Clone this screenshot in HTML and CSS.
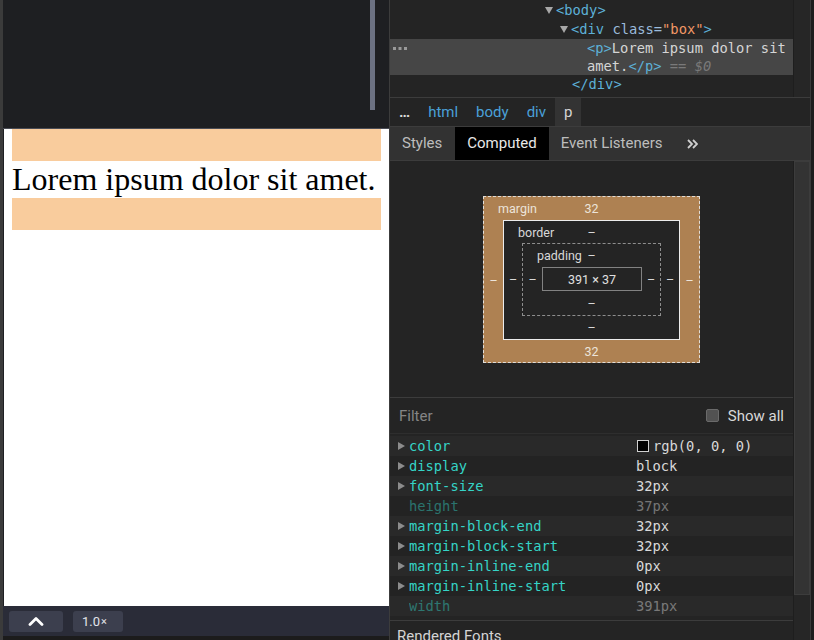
FILE: index.html
```html
<!DOCTYPE html>
<html lang="en">
<head>
<meta charset="utf-8">
<title>DevTools Computed</title>
<link rel="stylesheet" href="styles.css">
</head>
<body>
<div class="app">
  <div class="viewport-pane">
    <div class="viewport-dark"><div class="vthumb"></div></div>
    <div class="page">
      <div class="hl"></div>
      <p class="lorem">Lorem ipsum dolor sit amet.</p>
      <div class="hl"></div>
    </div>
    <div class="toolbar">
      <div class="tb-btn tb-up"><svg width="16" height="10" viewBox="0 0 16 10"><polyline points="2,8.5 8,2.5 14,8.5" fill="none" stroke="#ffffff" stroke-width="2.8" stroke-linecap="round" stroke-linejoin="round"/></svg></div>
      <div class="tb-btn tb-zoom">1.0<span class="times">×</span></div>
    </div>
    <div class="bottom-strip"></div>
  </div>

  <div class="devtools">
    <div class="dom-area">
      <div class="dom-tree">
        <div class="dom-row r-body"><span class="tri-down"></span><span class="tag">&lt;body&gt;</span></div>
        <div class="dom-row r-div"><span class="tri-down"></span><span class="tag">&lt;div</span> <span class="attr">class=</span><span class="aval">"box"</span><span class="tag">&gt;</span></div>
        <div class="dom-row r-sel">
          <svg class="sel-dots" width="14" height="3" viewBox="0 0 14 3"><rect x="0" y="0" width="3" height="3" fill="#9a9a9a"/><rect x="5.5" y="0" width="3" height="3" fill="#9a9a9a"/><rect x="11" y="0" width="3" height="3" fill="#9a9a9a"/></svg>
          <div class="sel-text"><span class="tag">&lt;p&gt;</span><span class="txt">Lorem ipsum dolor sit</span><br><span class="txt">amet.</span><span class="tag">&lt;/p&gt;</span> <span class="eq">== $0</span></div>
        </div>
        <div class="dom-row r-enddiv"><span class="tag">&lt;/div&gt;</span></div>
      </div>
      <div class="dom-scroll"></div>
    </div>

    <div class="crumbs">
      <span class="crumb crumb-more">…</span>
      <span class="crumb crumb-link">html</span>
      <span class="crumb crumb-link">body</span>
      <span class="crumb crumb-link">div</span>
      <span class="crumb crumb-sel">p</span>
    </div>

    <div class="tabs">
      <span class="tab tab-styles">Styles</span>
      <span class="tab tab-active">Computed</span>
      <span class="tab">Event Listeners</span>
      <span class="tab tab-more"><svg width="11" height="10" viewBox="0 0 11 10"><polyline points="1,1 5,5 1,9" fill="none" stroke="#cfcfcf" stroke-width="1.8"/><polyline points="6,1 10,5 6,9" fill="none" stroke="#cfcfcf" stroke-width="1.8"/></svg></span>
    </div>

    <div class="computed">
      <div class="computed-main">
        <div class="bm-wrap">
          <div class="bm bm-margin">
            <div class="bm-top"><span class="bm-label">margin</span><span class="bm-val">32</span><span></span></div>
            <div class="bm-side">–</div>
            <div class="bm bm-border">
              <div class="bm-top"><span class="bm-label">border</span><span class="bm-val">–</span><span></span></div>
              <div class="bm-side">–</div>
              <div class="bm bm-padding">
                <div class="bm-top"><span class="bm-label">padding</span><span class="bm-val">–</span><span></span></div>
                <div class="bm-side">–</div>
                <div class="bm-content">391 × 37</div>
                <div class="bm-side">–</div>
                <div class="bm-bottom">–</div>
              </div>
              <div class="bm-side">–</div>
              <div class="bm-bottom">–</div>
            </div>
            <div class="bm-side">–</div>
            <div class="bm-bottom">32</div>
          </div>
        </div>

        <div class="filter-row">
          <span class="filter-ph">Filter</span>
          <label class="showall"><span class="cbox"></span><span>Show all</span></label>
        </div>

        <div class="props">
          <div class="prop odd"><span class="tri-right"></span><span class="pname">color</span><span class="pval"><span class="swatch"></span>rgb(0, 0, 0)</span></div>
          <div class="prop"><span class="tri-right"></span><span class="pname">display</span><span class="pval">block</span></div>
          <div class="prop odd"><span class="tri-right"></span><span class="pname">font-size</span><span class="pval">32px</span></div>
          <div class="prop dim"><span></span><span class="pname">height</span><span class="pval">37px</span></div>
          <div class="prop odd"><span class="tri-right"></span><span class="pname">margin-block-end</span><span class="pval">32px</span></div>
          <div class="prop"><span class="tri-right"></span><span class="pname">margin-block-start</span><span class="pval">32px</span></div>
          <div class="prop odd"><span class="tri-right"></span><span class="pname">margin-inline-end</span><span class="pval">0px</span></div>
          <div class="prop"><span class="tri-right"></span><span class="pname">margin-inline-start</span><span class="pval">0px</span></div>
          <div class="prop odd dim"><span></span><span class="pname">width</span><span class="pval">391px</span></div>
        </div>

        <div class="section-head">Rendered Fonts</div>
      </div>
      <div class="c-scroll"><div class="c-thumb"></div></div>
    </div>
  </div>
  <div class="edge"></div>
</div>
</body>
</html>
```

FILE: styles.css
```css
* { box-sizing: border-box; margin: 0; padding: 0; }
html, body { width: 814px; height: 640px; overflow: hidden; background: #242424; }
body { font-family: Roboto, "Noto Sans", sans-serif; font-size: 15px; color: #d6d6d6; }

.app { display: flex; width: 814px; height: 640px; }

/* ---------- left viewport ---------- */
.viewport-pane {
  width: 389px; flex: none; display: flex; flex-direction: column;
  border-left: 3px solid #3b3b3b; background: #1e1f22;
}
.viewport-dark {
  height: 129px; flex: none; border-bottom: 1px solid #4a4c55;
  display: flex; justify-content: flex-end; align-items: flex-start; padding-right: 14px;
}
.vthumb { width: 5px; height: 110px; background: #6c7182; }
.page { height: 477px; flex: none; background: #ffffff; margin-left: 1px; padding: 0 8px; }
.hl { height: 32px; background: #f9cc9d; }
.lorem { font-family: "Liberation Serif", "Times New Roman", serif; font-size: 32px; line-height: 37px; color: #000; white-space: nowrap; }
.toolbar { height: 30px; flex: none; background: #2a2c38; display: flex; align-items: center; padding-left: 6px; gap: 10px; }
.tb-btn { height: 21px; border-radius: 3px; background: #3c3f4e; display: flex; align-items: center; color: #e2e4ea; font-size: 13px; }
.tb-up { width: 54px; justify-content: center; }
.tb-zoom { width: 50px; margin-top: 1px; padding-left: 9px; }
.tb-zoom .times { font-size: 11px; margin-left: 1px; }
.bottom-strip { flex: 1; background: #1c1c1c; }

/* ---------- devtools ---------- */
.devtools { width: 421px; flex: none; display: flex; flex-direction: column; border-left: 1px solid #3c3c3c; background: #242424; }
.edge { flex: 1; background: #1d1d1d; border-left: 1px solid #3a3a3a; }

.dom-area { height: 97px; flex: none; display: flex; }
.dom-tree { flex: 1; padding-top: 1px; font-family: "DejaVu Sans Mono", monospace; font-size: 13.75px; line-height: 19px; color: #d5d5d5; white-space: nowrap; overflow: hidden; }
.dom-scroll { width: 17px; flex: none; background: #262626; border-left: 1px solid #1e1e1e; }
.dom-row { display: flex; align-items: center; height: 19px; }
.r-body { padding-left: 155px; }
.r-div { padding-left: 170px; }
.r-enddiv { padding-left: 182px; }
.r-sel { height: 36px; background: #464646; align-items: flex-start; padding-left: 3px; }
.sel-dots { margin-top: 8px; flex: none; }
.sel-text { line-height: 18px; margin-left: 180px; }
.tri-down { width: 0; height: 0; border-left: 4px solid transparent; border-right: 4px solid transparent; border-top: 7px solid #a8a8a8; margin-right: 3px; flex: none; }
.tag { color: #5db0d7; }
.attr { color: #9bbbdc; }
.aval { color: #f29766; }
.txt { color: #d5d5d5; }
.eq { color: #7a7a7a; font-style: italic; }
.dom-row .attr { margin-left: 8.3px; }

.crumbs { height: 30px; flex: none; border-top: 1px solid #3c3c3c; border-bottom: 1px solid #3c3c3c; display: flex; }
.crumb { padding: 0 9px; line-height: 28px; height: 28px; }
.crumb-more { color: #dcdcdc; font-weight: 700; }
.crumb-link { color: #4aa0d8; }
.crumb-sel { color: #d6d6d6; background: #333333; }

.tabs { height: 34px; flex: none; background: #323232; border-bottom: 1px solid #3c3c3c; display: flex; }
.tab { padding: 0 12px; line-height: 33px; height: 33px; color: #bdbdbd; }
.tab-styles { padding-right: 13px; }
.tab-active { background: #000000; color: #e8e8e8; }
.tab-more { display: flex; align-items: center; }

.computed { flex: 1; display: flex; min-height: 0; }
.computed-main { flex: 1; padding-top: 35px; overflow: hidden; }
.c-scroll { width: 17px; flex: none; background: #262626; border-left: 1px solid #1e1e1e; }
.c-thumb { height: 434px; background: #333333; border: 1px solid #3c3c3c; }

/* box model */
.bm-wrap { display: flex; justify-content: center; margin-bottom: 34px; }
.bm { display: grid; font-size: 12.5px; color: #d8d8d8; }
.bm-margin { width: 217px; height: 167px; background: #ae8152; border: 1px dashed #e0ddd8; grid-template-columns: 19px 177px 19px; grid-template-rows: 23px 120px 22px; color: #ece4da; }
.bm-border { width: 177px; height: 120px; background: #242424; border: 1px solid #ececec; grid-template-columns: 18px 139px 18px; grid-template-rows: 22px 73px 23px; color: #d8d8d8; }
.bm-padding { width: 139px; height: 73px; border: 1px dashed #8e8e8e; grid-template-columns: 19px 100px 18px; grid-template-rows: 23px 24px 24px; }
.bm-top { grid-column: 1 / -1; display: grid; grid-template-columns: 1fr auto 1fr; align-items: center; }
.bm-label { padding-left: 14px; }
.bm-side { display: flex; align-items: center; justify-content: center; }
.bm-bottom { grid-column: 1 / -1; display: flex; align-items: center; justify-content: center; }
.bm-content { width: 100px; height: 24px; border: 1px solid #828282; display: flex; align-items: center; justify-content: center; color: #e0e0e0; }

/* filter */
.filter-row { height: 37px; border-top: 1px solid #3c3c3c; border-bottom: 1px solid #2e2e2e; display: flex; align-items: center; justify-content: space-between; padding: 0 9px; }
.filter-ph { color: #858585; }
.showall { display: flex; align-items: center; gap: 9px; color: #d8d8d8; }
.cbox { width: 13px; height: 13px; border-radius: 2px; background: #525252; border: 1px solid #6a6a6a; }

/* properties */
.props { padding-top: 2px; font-family: "DejaVu Sans Mono", monospace; font-size: 13.75px; }
.prop { display: grid; grid-template-columns: 19px 227px 1fr; height: 20px; align-items: center; background: #232323; white-space: nowrap; }
.prop.odd { background: #292929; }
.tri-right { width: 0; height: 0; margin-left: 8px; border-top: 4.5px solid transparent; border-bottom: 4.5px solid transparent; border-left: 7px solid #8c8c8c; }
.pname { color: #35d4c7; }
.pval { color: #d9d9d9; display: flex; align-items: center; }
.prop.dim .pname, .prop.dim .pval { opacity: 0.45; }
.swatch { width: 12px; height: 12px; background: #000; border: 1px solid #d0d0d0; margin: 0 4px 0 1px; }

.section-head { margin-top: 4px; border-top: 1px solid #3c3c3c; padding-left: 7px; line-height: 30px; color: #d4d4d4; }
```
